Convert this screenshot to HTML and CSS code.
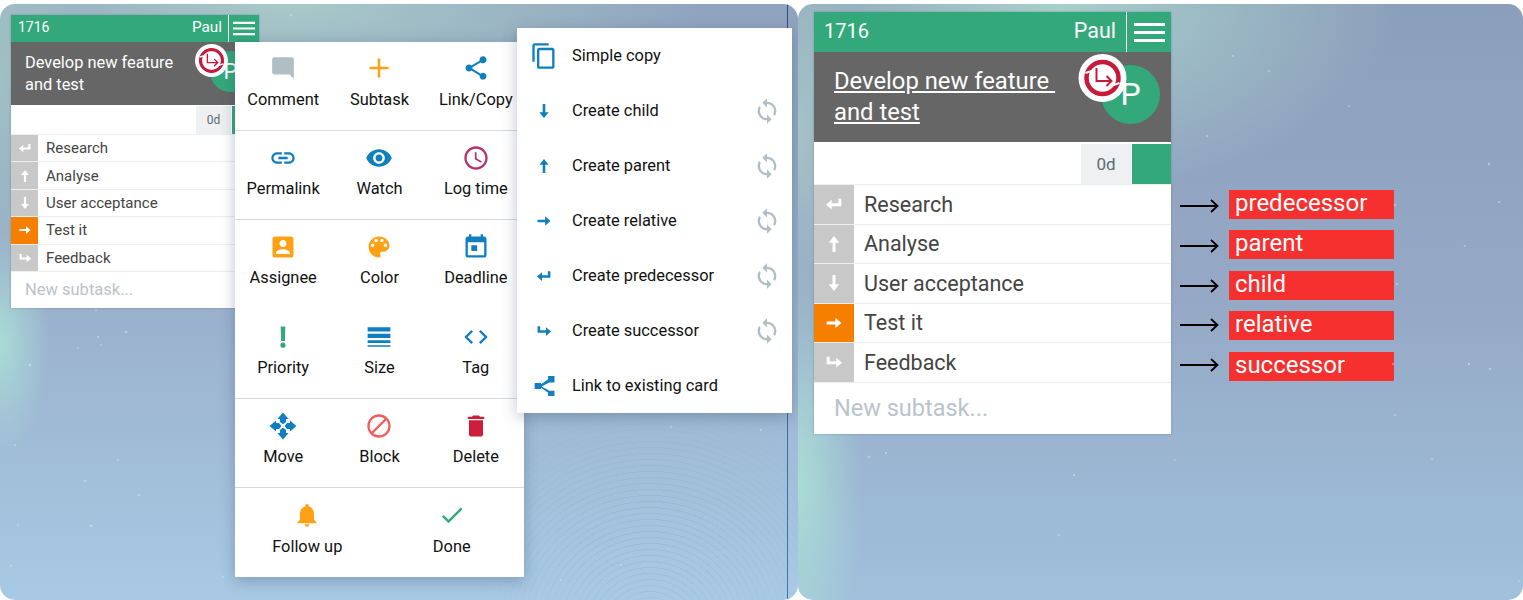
FILE: index.html
```html
<!DOCTYPE html>
<html lang="en">
<head>
    <meta charset="UTF-8">
    <meta name="viewport" content="width=device-width, initial-scale=1.0">
    <title>Card relations</title>
    <link rel="stylesheet" href="styles.css">
</head>
<body>
    <!-- Icon sprite -->
    <svg class="sprite" xmlns="http://www.w3.org/2000/svg">
        <symbol id="i-menu" viewBox="0 0 31 19"><path d="M0 0h31v3H0zM0 8h31v3H0zM0 16h31v3H0z"/></symbol>
        <symbol id="i-comment" viewBox="0 0 24 24"><path d="M21.99 4c0-1.1-.89-2-1.99-2H4c-1.1 0-2 .9-2 2v12c0 1.1.9 2 2 2h14l4 4-.01-18z"/></symbol>
        <symbol id="i-plus" viewBox="0 0 28 28"><path d="M4.500 12.700h19v2.600h-19zM12.700 4.500h2.600v19h-2.600z"/></symbol>
        <symbol id="i-share" viewBox="0 0 24 24"><path d="M18 16.080c-.76 0-1.440.3-1.960.77L8.910 12.700c.05-.23.09-.46.09-.7s-.04-.47-.09-.7l7.050-4.110c.54.5 1.250.81 2.040.81 1.660 0 3-1.340 3-3s-1.340-3-3-3-3 1.340-3 3c0 .24.04.47.09.7L8.040 9.810C7.500 9.310 6.790 9 6 9c-1.660 0-3 1.340-3 3s1.340 3 3 3c.79 0 1.500-.31 2.040-.81l7.120 4.160c-.05.21-.08.43-.08.65 0 1.610 1.310 2.920 2.920 2.920 1.610 0 2.920-1.310 2.920-2.920s-1.310-2.920-2.920-2.920z"/></symbol>
        <symbol id="i-link" viewBox="0 0 24 24"><path d="M3.900 12c0-1.710 1.390-3.100 3.100-3.100h4V7H7c-2.760 0-5 2.240-5 5s2.240 5 5 5h4v-1.900H7c-1.710 0-3.100-1.390-3.100-3.100zM8 13h8v-2H8v2zm9-6h-4v1.900h4c1.710 0 3.100 1.390 3.100 3.100s-1.390 3.100-3.100 3.100h-4V17h4c2.760 0 5-2.240 5-5s-2.240-5-5-5z"/></symbol>
        <symbol id="i-eye" viewBox="0 0 24 24"><path d="M12 4.500C7 4.500 2.730 7.610 1 12c1.730 4.390 6 7.500 11 7.500s9.270-3.110 11-7.500c-1.730-4.390-6-7.500-11-7.500zM12 17c-2.760 0-5-2.240-5-5s2.240-5 5-5 5 2.240 5 5-2.240 5-5 5zm0-8c-1.660 0-3 1.340-3 3s1.340 3 3 3 3-1.340 3-3-1.340-3-3-3z"/></symbol>
        <symbol id="i-clock" viewBox="0 0 24 24"><path d="M11.990 2C6.470 2 2 6.480 2 12s4.470 10 9.990 10C17.520 22 22 17.520 22 12S17.520 2 11.990 2zM12 20c-4.420 0-8-3.580-8-8s3.580-8 8-8 8 3.580 8 8-3.580 8-8 8zm.5-13H11v6l5.250 3.150.75-1.230-4.500-2.670z"/></symbol>
        <symbol id="i-person" viewBox="0 0 24 24"><path d="M3 5v14c0 1.100.89 2 2 2h14c1.100 0 2-.9 2-2V5c0-1.100-.9-2-2-2H5c-1.110 0-2 .9-2 2zm12 4c0 1.660-1.340 3-3 3s-3-1.340-3-3 1.340-3 3-3 3 1.340 3 3zm-9 8c0-2 4-3.100 6-3.100s6 1.100 6 3.100v1H6v-1z"/></symbol>
        <symbol id="i-palette" viewBox="0 0 24 24"><path d="M12 3c-4.970 0-9 4.030-9 9s4.030 9 9 9c.83 0 1.500-.67 1.500-1.500 0-.39-.15-.74-.39-1.010-.23-.26-.38-.61-.38-.99 0-.83.67-1.500 1.500-1.500H16c2.760 0 5-2.240 5-5 0-4.420-4.030-8-9-8zm-5.500 9c-.83 0-1.500-.67-1.500-1.500S5.670 9 6.500 9 8 9.670 8 10.500 7.330 12 6.500 12zm3-4C8.670 8 8 7.330 8 6.500S8.670 5 9.500 5s1.500.67 1.500 1.500S10.330 8 9.500 8zm5 0c-.83 0-1.500-.67-1.500-1.500S13.670 5 14.500 5s1.500.67 1.500 1.500S15.330 8 14.500 8zm3 4c-.83 0-1.500-.67-1.500-1.500S16.670 9 17.500 9s1.500.67 1.500 1.500-.67 1.500-1.500 1.500z"/></symbol>
        <symbol id="i-event" viewBox="0 0 24 24"><path d="M13 10.500H8v5h5zM16 1v2H8V1H6v2H5c-1.110 0-1.990.9-1.990 2L3 19c0 1.100.89 2 2 2h14c1.100 0 2-.9 2-2V5c0-1.100-.9-2-2-2h-1V1h-2zm3 18H5V8h14v11z"/></symbol>
        <symbol id="i-priority" viewBox="0 0 24 24"><path d="M10 3h4l-.4 12.500h-3.200z"/><circle cx="12" cy="19" r="2.200"/></symbol>
        <symbol id="i-size" viewBox="0 0 24 24"><path d="M1.500 3h21v4h-21zM1.500 9h21v4h-21zM1.500 15h21v2.500h-21zM1.500 19.500h21V21h-21z"/></symbol>
        <symbol id="i-code" viewBox="0 0 24 24"><path d="M9.400 16.600L4.800 12l4.600-4.600L8 6l-6 6 6 6 1.400-1.400zm5.200 0l4.600-4.600-4.600-4.600L16 6l6 6-6 6-1.400-1.400z"/></symbol>
        <symbol id="i-move" viewBox="0 0 24 24"><path d="M12 .5L16.800 6h-2.200v2.600L12 10.600 9.400 8.600V6H7.200zM12 23.500L7.200 18h2.200v-2.600l2.600-2 2.600 2V18h2.200zM.5 12L6 7.200v2.200h2.600l2 2.600-2 2.600H6v2.200zM23.500 12L18 16.800v-2.200h-2.600l-2-2.600 2-2.600H18V7.200z"/></symbol>
        <symbol id="i-block" viewBox="0 0 24 24"><path d="M12 2C6.480 2 2 6.480 2 12s4.480 10 10 10 10-4.480 10-10S17.520 2 12 2zM4 12c0-4.420 3.580-8 8-8 1.850 0 3.550.63 4.900 1.690L5.690 16.900C4.630 15.550 4 13.850 4 12zm8 8c-1.850 0-3.550-.63-4.900-1.690L18.310 7.100C19.370 8.450 20 10.150 20 12c0 4.420-3.580 8-8 8z"/></symbol>
        <symbol id="i-trash" viewBox="0 0 24 24"><path d="M6 19c0 1.100.9 2 2 2h8c1.100 0 2-.9 2-2V7H6v12zM19 4h-3.500l-1-1h-5l-1 1H5v2h14V4z"/></symbol>
        <symbol id="i-bell" viewBox="0 0 24 24"><path d="M12 22c1.100 0 2-.9 2-2h-4c0 1.100.89 2 2 2zm6-6v-5c0-3.070-1.640-5.640-4.500-6.320V4c0-.83-.67-1.500-1.500-1.500s-1.500.67-1.500 1.500v.68C7.630 5.360 6 7.920 6 11v5l-2 2v1h16v-1l-2-2z"/></symbol>
        <symbol id="i-check" viewBox="0 0 24 24"><path d="M9 16.170L4.830 12l-1.410 1.410L9 19 21 7l-1.410-1.410z"/></symbol>
        <symbol id="i-copy" viewBox="0 0 24 24"><path d="M16 1H4c-1.100 0-2 .9-2 2v14h2V3h12V1zm3 4H8c-1.100 0-2 .9-2 2v14c0 1.100.9 2 2 2h11c1.100 0 2-.9 2-2V7c0-1.100-.9-2-2-2zm0 16H8V7h11v14z"/></symbol>
        <symbol id="i-down" viewBox="0 0 24 24"><path d="M10.900 6h2.200v7H16l-4 5-4-5h2.900z"/></symbol>
        <symbol id="i-up" viewBox="0 0 24 24"><path d="M10.900 18h2.200v-7H16l-4-5-4 5h2.900z"/></symbol>
        <symbol id="i-right" viewBox="0 0 24 24"><path d="M6.500 10.900v2.200H13V16l4.500-4L13 8v2.900z"/></symbol>
        <symbol id="i-pred" viewBox="0 0 24 24"><path d="M17.500 8h-2.200v3.400h-5V8.800L6 12.500l4.300 3.700v-2.600h7.200z"/></symbol>
        <symbol id="i-succ" viewBox="0 0 24 24"><path d="M6.500 8h2.200v3.400h5V8.800l4.300 3.700-4.300 3.700v-2.600H6.500z"/></symbol>
        <symbol id="i-sync" viewBox="0 0 24 24"><path d="M12 4V1L8 5l4 4V6c3.310 0 6 2.690 6 6 0 1.010-.25 1.970-.7 2.800l1.460 1.460C19.540 15.030 20 13.570 20 12c0-4.420-3.580-8-8-8zm0 14c-3.310 0-6-2.690-6-6 0-1.010.25-1.970.7-2.800L5.240 7.740C4.460 8.970 4 10.430 4 12c0 4.420 3.580 8 8 8v3l4-4-4-4v3z"/></symbol>
        <symbol id="i-tree" viewBox="0 0 24 24"><path d="M4 9.500h5.500v1l6-4.200V3.500h5.500V9h-4.500l-6.500 3.500 6.500 3.500h4.500v4.500h-5.500v-2.800l-6-4.200v1H4z"/></symbol>
        <symbol id="i-badge" viewBox="0 0 48 48">
            <circle cx="24" cy="24" r="24" fill="#fff"/>
            <circle cx="24" cy="24" r="16" fill="none" stroke="#c8193a" stroke-width="4.500"/>
            <path d="M7 19l6-2M41 29l-6 2" stroke="#fff" stroke-width="2"/>
            <path d="M18 14v13h15M28 22l5 5-5 5" fill="none" stroke="#c8193a" stroke-width="2"/>
        </symbol>
        <symbol id="i-pointer" viewBox="0 0 39 14"><path d="M0 7h37M31 1l6.500 6L31 13" fill="none" stroke="#000" stroke-width="1.800"/></symbol>
    </svg>

    <div class="screens">
        <!-- Left screen: card with open menus -->
        <section class="panel panel-left">
            <div class="stars stars-left"></div>
            <div class="ripples"></div>
            <div class="edge-line"></div>

            <div class="card card-small">
                <div class="card-head">
                    <span class="card-id">1716</span>
                    <span class="card-owner">Paul</span>
                    <span class="card-burger"><svg><use href="#i-menu"/></svg></span>
                </div>
                <div class="card-title">
                    Develop new feature&nbsp;<br>and test
                    <span class="avatar">P</span>
                    <svg class="badge"><use href="#i-badge"/></svg>
                </div>
                <div class="card-meta"><span class="chip">0d</span><span class="meta-bar"></span></div>
                <ul class="rows">
                    <li class="row"><span class="tag"><svg><use href="#i-pred"/></svg></span>Research</li>
                    <li class="row"><span class="tag"><svg><use href="#i-up"/></svg></span>Analyse</li>
                    <li class="row"><span class="tag"><svg><use href="#i-down"/></svg></span>User acceptance</li>
                    <li class="row"><span class="tag tag-current"><svg><use href="#i-right"/></svg></span>Test it</li>
                    <li class="row"><span class="tag"><svg><use href="#i-succ"/></svg></span>Feedback</li>
                </ul>
                <div class="new-subtask">New subtask...</div>
            </div>

            <!-- Action menu -->
            <div class="menu">
                <div class="menu-group">
                    <div class="menu-item"><svg class="ic grey small"><use href="#i-comment"/></svg>Comment</div>
                    <div class="menu-item"><svg class="ic orange"><use href="#i-plus"/></svg>Subtask</div>
                    <div class="menu-item"><svg class="ic blue"><use href="#i-share"/></svg>Link/Copy</div>
                </div>
                <div class="menu-group">
                    <div class="menu-item"><svg class="ic blue"><use href="#i-link"/></svg>Permalink</div>
                    <div class="menu-item"><svg class="ic blue"><use href="#i-eye"/></svg>Watch</div>
                    <div class="menu-item"><svg class="ic magenta"><use href="#i-clock"/></svg>Log time</div>
                </div>
                <div class="menu-group">
                    <div class="menu-item"><svg class="ic orange"><use href="#i-person"/></svg>Assignee</div>
                    <div class="menu-item"><svg class="ic orange"><use href="#i-palette"/></svg>Color</div>
                    <div class="menu-item"><svg class="ic blue"><use href="#i-event"/></svg>Deadline</div>
                    <div class="menu-item"><svg class="ic green"><use href="#i-priority"/></svg>Priority</div>
                    <div class="menu-item"><svg class="ic blue small"><use href="#i-size"/></svg>Size</div>
                    <div class="menu-item"><svg class="ic blue"><use href="#i-code"/></svg>Tag</div>
                </div>
                <div class="menu-group">
                    <div class="menu-item"><svg class="ic blue"><use href="#i-move"/></svg>Move</div>
                    <div class="menu-item"><svg class="ic coral"><use href="#i-block"/></svg>Block</div>
                    <div class="menu-item"><svg class="ic red"><use href="#i-trash"/></svg>Delete</div>
                </div>
                <div class="menu-group menu-group-two">
                    <div class="menu-item"><svg class="ic orange"><use href="#i-bell"/></svg>Follow up</div>
                    <div class="menu-item"><svg class="ic green"><use href="#i-check"/></svg>Done</div>
                </div>
            </div>

            <!-- Link/Copy submenu -->
            <ul class="copy-menu">
                <li class="copy-item"><svg class="ic blue"><use href="#i-copy"/></svg><span class="copy-label">Simple copy</span></li>
                <li class="copy-item"><svg class="ic blue"><use href="#i-down"/></svg><span class="copy-label">Create child</span><svg class="ic grey"><use href="#i-sync"/></svg></li>
                <li class="copy-item"><svg class="ic blue"><use href="#i-up"/></svg><span class="copy-label">Create parent</span><svg class="ic grey"><use href="#i-sync"/></svg></li>
                <li class="copy-item"><svg class="ic blue"><use href="#i-right"/></svg><span class="copy-label">Create relative</span><svg class="ic grey"><use href="#i-sync"/></svg></li>
                <li class="copy-item"><svg class="ic blue"><use href="#i-pred"/></svg><span class="copy-label">Create predecessor</span><svg class="ic grey"><use href="#i-sync"/></svg></li>
                <li class="copy-item"><svg class="ic blue"><use href="#i-succ"/></svg><span class="copy-label">Create successor</span><svg class="ic grey"><use href="#i-sync"/></svg></li>
                <li class="copy-item"><svg class="ic blue"><use href="#i-tree"/></svg><span class="copy-label">Link to existing card</span></li>
            </ul>
        </section>

        <!-- Right screen: enlarged card with legend -->
        <section class="panel panel-right">
            <div class="stars stars-right"></div>

            <div class="card card-big">
                <div class="card-head">
                    <span class="card-id">1716</span>
                    <span class="card-owner">Paul</span>
                    <span class="card-burger"><svg><use href="#i-menu"/></svg></span>
                </div>
                <div class="card-title">
                    <u>Develop new feature&nbsp;<br>and test</u>
                    <span class="avatar">P</span>
                    <svg class="badge"><use href="#i-badge"/></svg>
                </div>
                <div class="card-meta"><span class="chip">0d</span><span class="meta-bar"></span></div>
                <ul class="rows">
                    <li class="row"><span class="tag"><svg><use href="#i-pred"/></svg></span>Research</li>
                    <li class="row"><span class="tag"><svg><use href="#i-up"/></svg></span>Analyse</li>
                    <li class="row"><span class="tag"><svg><use href="#i-down"/></svg></span>User acceptance</li>
                    <li class="row"><span class="tag tag-current"><svg><use href="#i-right"/></svg></span>Test it</li>
                    <li class="row"><span class="tag"><svg><use href="#i-succ"/></svg></span>Feedback</li>
                </ul>
                <div class="new-subtask">New subtask...</div>
            </div>

            <ul class="legend">
                <li class="legend-row"><svg class="pointer"><use href="#i-pointer"/></svg><span class="legend-label">predecessor</span></li>
                <li class="legend-row"><svg class="pointer"><use href="#i-pointer"/></svg><span class="legend-label">parent</span></li>
                <li class="legend-row"><svg class="pointer"><use href="#i-pointer"/></svg><span class="legend-label">child</span></li>
                <li class="legend-row"><svg class="pointer"><use href="#i-pointer"/></svg><span class="legend-label">relative</span></li>
                <li class="legend-row"><svg class="pointer"><use href="#i-pointer"/></svg><span class="legend-label">successor</span></li>
            </ul>
        </section>
    </div>
</body>
</html>
```

FILE: styles.css
```css
/* Page */
body {
    margin: 0;
    background: #fff;
    font-family: Roboto, "Liberation Sans", sans-serif;
    color: #111;
    overflow: hidden;
}

ul {
    list-style: none;
    margin: 0;
    padding: 0;
}

.sprite {
    display: none;
}

.screens {
    display: flex;
    height: 596px;
    padding-top: 4px;
}

/* Wallpaper panels */
.panel {
    position: relative;
    box-sizing: border-box;
    height: 596px;
    border-radius: 15px;
    overflow: hidden;
}

.panel-left {
    width: 798px;
    padding: 11px 0 0 11px;
    background:
        radial-gradient(ellipse 50px 110px at 0 340px, #a9dcd6 0%, rgba(169, 220, 214, 0) 100%),
        radial-gradient(ellipse 420px 120px at 290px 0, #a8c9c8 0%, rgba(168, 201, 200, 0) 100%),
        radial-gradient(ellipse 90px 220px at 0 80px, #9fc0c4 0%, rgba(159, 192, 196, 0) 100%),
        linear-gradient(180deg, #8fa3bf 0%, #9ab0cc 50%, #a8c9e4 100%);
}

.panel-right {
    flex: 1;
    display: flex;
    align-items: flex-start;
    padding: 8px 0 0 16px;
    background:
        radial-gradient(ellipse 65px 220px at 0 480px, #aadcd5 0%, rgba(170, 220, 213, 0) 100%),
        radial-gradient(ellipse 340px 190px at 260px 0, #a8cfcb 0%, rgba(168, 207, 203, 0) 100%),
        radial-gradient(ellipse 70px 200px at 0 130px, #a4c4c6 0%, rgba(164, 196, 198, 0) 100%),
        linear-gradient(180deg, #8c9fba 0%, #95a9c6 50%, #a0c0dc 100%);
}

.stars {
    position: absolute;
    top: 0;
    left: 0;
    width: 2px;
    height: 2px;
    border-radius: 50%;
}

.stars-left {
    box-shadow: 125px 327px 1px rgba(255,255,255,.6), 97px 332px 1px rgba(255,255,255,.5), 29px 360px 1px rgba(255,255,255,.5),
        77px 343px 1px rgba(255,255,255,.3), 100px 340px 1px rgba(255,255,255,.4), 14px 440px 1px rgba(255,255,255,.4),
        84px 476px 1px rgba(255,255,255,.5), 138px 490px 1px rgba(255,255,255,.5), 90px 521px 1px rgba(255,255,255,.5),
        10px 561px 1px rgba(255,255,255,.4), 17px 520px 1px rgba(255,255,255,.3), 222px 572px 1px rgba(255,255,255,.4),
        117px 455px 1px rgba(255,255,255,.3), 670px 422px 1px rgba(255,255,255,.4), 760px 425px 1px rgba(255,255,255,.5),
        620px 560px 1px rgba(255,255,255,.3), 560px 575px 1px rgba(255,255,255,.3), 400px 290px 1px rgba(255,255,255,.3),
        140px 12px 1px rgba(255,255,255,.3), 290px 10px 1px rgba(255,255,255,.4), 95px 305px 1px rgba(255,255,255,.3);
}

.stars-right {
    box-shadow: 434px 51px 1px rgba(255,255,255,.5), 470px 66px 1px rgba(255,255,255,.4), 550px 101px 1px rgba(255,255,255,.4),
        408px 131px 1px rgba(255,255,255,.5), 690px 159px 1px rgba(255,255,255,.6), 596px 200px 1px rgba(255,255,255,.6),
        700px 197px 1px rgba(255,255,255,.5), 666px 241px 1px rgba(255,255,255,.4), 598px 279px 1px rgba(255,255,255,.5),
        594px 359px 1px rgba(255,255,255,.5), 275px 403px 1px rgba(255,255,255,.6), 670px 359px 1px rgba(255,255,255,.6),
        691px 364px 1px rgba(255,255,255,.6), 596px 410px 1px rgba(255,255,255,.4), 275px 470px 1px rgba(255,255,255,.5),
        73px 400px 1px rgba(255,255,255,.4), 70px 452px 1px rgba(255,255,255,.5), 87px 448px 1px rgba(255,255,255,.5),
        110px 400px 1px rgba(255,255,255,.4), 143px 403px 1px rgba(255,255,255,.5), 260px 530px 1px rgba(255,255,255,.4),
        633px 454px 1px rgba(255,255,255,.4), 720px 576px 1px rgba(255,255,255,.3), 30px 418px 1px rgba(255,255,255,.4),
        376px 455px 1px rgba(255,255,255,.3), 190px 418px 1px rgba(255,255,255,.4);
}

.ripples {
    position: absolute;
    left: 480px;
    top: 340px;
    width: 318px;
    height: 256px;
    background: repeating-radial-gradient(circle at 170px 290px, rgba(70, 110, 160, .08) 0 1px, transparent 1px 6px);
    -webkit-mask-image: radial-gradient(ellipse 200px 140px at 170px 190px, #000 30%, transparent 100%);
    mask-image: radial-gradient(ellipse 200px 140px at 170px 190px, #000 30%, transparent 100%);
}

.edge-line {
    position: absolute;
    top: 0;
    bottom: 0;
    left: 787px;
    width: 1px;
    background: linear-gradient(180deg, #2f4a80, #3f77ad);
}

/* Card */
.card {
    position: relative;
    flex: none;
    background: #fff;
    box-shadow: 0 0 2px rgba(90, 100, 120, .5);
}

.card-small {
    width: 248px;
    --head: 27px;
    --id-size: 14px;
    --owner-size: 15.300px;
    --owner-gap: 6px;
    --head-pad: 7px;
    --burger: 31px;
    --burger-w: 22px;
    --burger-h: 15px;
    --title-h: 63px;
    --title-size: 16.400px;
    --title-lh: 22px;
    --title-pad: 10px 0 0 14px;
    --meta-top: 1px;
    --meta-h: 29px;
    --chip-w: 35px;
    --chip-size: 12px;
    --bar-w: 27px;
    --row-h: 27.400px;
    --tag-w: 27px;
    --tag-icon: 24px;
    --row-size: 15px;
    --row-pad: 8px;
    --new-h: 36px;
    --new-size: 16.500px;
    --new-pad: 14px;
}

.card-big {
    width: 357px;
    --head: 40px;
    --id-size: 20px;
    --owner-size: 21.500px;
    --owner-gap: 10px;
    --head-pad: 10px;
    --burger: 45px;
    --burger-w: 31px;
    --burger-h: 19px;
    --title-h: 90px;
    --title-size: 23.800px;
    --title-lh: 31px;
    --title-pad: 14px 0 0 20px;
    --meta-top: 2px;
    --meta-h: 41px;
    --chip-w: 50px;
    --chip-size: 17px;
    --bar-w: 39px;
    --row-h: 39.500px;
    --tag-w: 40px;
    --tag-icon: 32px;
    --row-size: 21.500px;
    --row-pad: 10px;
    --new-h: 51px;
    --new-size: 23.500px;
    --new-pad: 20px;
}

.card-head {
    display: flex;
    align-items: center;
    box-sizing: border-box;
    height: var(--head);
    background: #33a97b;
    color: #fff;
    padding-left: var(--head-pad);
}

.card-id {
    flex: 1;
    font-size: var(--id-size);
    margin-bottom: 3px;
}

.card-owner {
    font-size: var(--owner-size);
    margin: 0 var(--owner-gap) 3px 0;
}

.card-burger {
    display: flex;
    align-items: center;
    justify-content: center;
    box-sizing: border-box;
    width: var(--burger);
    height: 100%;
    border-left: 1px solid #fff;
}

.card-burger svg {
    width: var(--burger-w);
    height: var(--burger-h);
    fill: #fff;
}

.card-title {
    position: relative;
    box-sizing: border-box;
    height: var(--title-h);
    padding: var(--title-pad);
    background: #666;
    color: #fff;
    font-size: var(--title-size);
    line-height: var(--title-lh);
}

.avatar {
    position: absolute;
    display: flex;
    align-items: center;
    justify-content: center;
    border-radius: 50%;
    background: #33a97b;
}

.badge {
    position: absolute;
}

.card-small .avatar {
    left: 199px;
    top: 9px;
    width: 41px;
    height: 41px;
    font-size: 22px;
}

.card-small .badge {
    left: 184px;
    top: 2px;
    width: 33px;
    height: 33px;
}

.card-big .avatar {
    left: 287px;
    top: 13px;
    width: 59px;
    height: 59px;
    font-size: 32px;
}

.card-big .badge {
    left: 264px;
    top: 2px;
    width: 49px;
    height: 48px;
}

.card-meta {
    display: flex;
    justify-content: flex-end;
    gap: 1px;
    height: var(--meta-h);
    margin-top: var(--meta-top);
    border-bottom: 1px solid #eee;
    box-sizing: border-box;
}

.chip {
    display: flex;
    align-items: center;
    justify-content: center;
    width: var(--chip-w);
    background: #eef0f1;
    color: #5a6a75;
    font-size: var(--chip-size);
}

.meta-bar {
    width: var(--bar-w);
    background: #33a97b;
}

.row {
    display: flex;
    align-items: center;
    box-sizing: border-box;
    height: var(--row-h);
    border-bottom: 1px solid #eee;
    color: #444;
    font-size: var(--row-size);
}

.tag {
    display: flex;
    align-items: center;
    justify-content: center;
    align-self: stretch;
    width: var(--tag-w);
    margin-right: var(--row-pad);
    background: #c8c8c8;
}

.tag svg {
    width: var(--tag-icon);
    height: var(--tag-icon);
    fill: #fff;
}

.tag-current {
    background: #f77f00;
}

.new-subtask {
    display: flex;
    align-items: center;
    height: var(--new-h);
    padding-left: var(--new-pad);
    color: #b9c4ca;
    font-size: var(--new-size);
}

/* Icons */
.ic {
    flex: none;
    width: 28px;
    height: 28px;
}

.ic.small {
    width: 26px;
}

.blue { fill: #0f7fbf; }
.orange { fill: #ffa114; }
.magenta { fill: #b5336d; }
.green { fill: #33a97b; }
.grey { fill: #b0bec5; }
.coral { fill: #f45a5a; }
.red { fill: #cc1d3a; }

/* Action menu */
.menu {
    position: absolute;
    left: 235px;
    top: 38px;
    width: 289px;
    background: #fff;
    box-shadow: 0 4px 14px rgba(40, 60, 90, .3);
    font-size: 16.400px;
}

.menu-group {
    display: grid;
    grid-template-columns: repeat(3, 1fr);
    row-gap: 2px;
    border-bottom: 1px solid #d6dadd;
}

.menu-group:last-child {
    border-bottom: 0;
    padding-bottom: 1px;
}

.menu-group-two {
    grid-template-columns: repeat(2, 1fr);
}

.menu-item {
    display: flex;
    flex-direction: column;
    align-items: center;
    gap: 7px;
    box-sizing: border-box;
    height: 88px;
    padding-top: 13px;
    line-height: 20px;
}

.menu-group:first-child .menu-item {
    gap: 8px;
    padding-top: 12px;
}

.menu-group-two .menu-item {
    gap: 8px;
}

/* Link/Copy submenu */
.copy-menu {
    position: absolute;
    left: 517px;
    top: 24px;
    width: 275px;
    background: #fff;
    box-shadow: 0 4px 14px rgba(40, 60, 90, .3);
    font-size: 16.400px;
}

.copy-item {
    display: flex;
    align-items: center;
    height: 55px;
    padding: 0 11px 0 13px;
}

.copy-label {
    flex: 1;
    margin-left: 14px;
}

/* Legend */
.legend {
    display: flex;
    flex-direction: column;
    gap: 11.400px;
    margin: 178px 0 0 9px;
}

.legend-row {
    display: flex;
    align-items: center;
    gap: 10px;
}

.pointer {
    width: 39px;
    height: 14px;
    margin-top: 3px;
}

.legend-row:nth-child(3) .pointer {
    margin-top: 1px;
}

.legend-row:nth-child(4) .pointer {
    margin-top: -1px;
}

.legend-row:nth-child(5) .pointer {
    margin-top: -3px;
}

.legend-label {
    box-sizing: border-box;
    width: 165px;
    height: 29px;
    padding-left: 6px;
    background: #f62f2f;
    color: #fff;
    font-size: 24px;
    line-height: 26px;
}
```
